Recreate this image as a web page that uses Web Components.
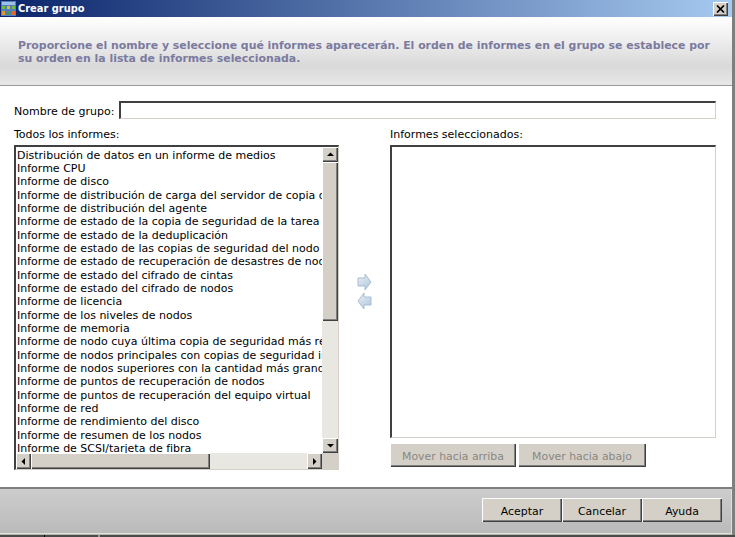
<!DOCTYPE html>
<html lang="es">
<head>
<meta charset="utf-8">
<title>Crear grupo</title>
<style>
  html, body { margin: 0; height: 100%; background: #fff; overflow: hidden; }
  body { font: 11px/13px "DejaVu Sans", Verdana, sans-serif; color: #000; }
</style>
</head>
<body>
<crear-grupo></crear-grupo>

<script>
// bevel shared by the classic buttons
const BEVEL = `
  background:#d4d0c8;
  box-shadow: inset 1px 1px 0 #fff, inset -1px -1px 0 #404040, inset -2px -2px 0 #808080;
`;

class WinTitlebar extends HTMLElement {
  connectedCallback() {
    this.attachShadow({ mode: 'open' });
    this.shadowRoot.innerHTML = `
      <style>
        :host {
          display:flex; align-items:center; height:17px; box-sizing:border-box;
          padding:0 4px 0 1px; gap:2px;
          background: linear-gradient(90deg,#0a246a 0%, #a6caf0 100%);
          color:#fff; font:bold 9.9px/17px "DejaVu Sans", sans-serif;
        }
        svg { width:15px; height:15px; flex:none; }
        .text { flex:1; }
        .close {
          width:15px; height:14px; display:flex; align-items:center; justify-content:center;
          ${BEVEL}
        }
        .close svg { width:9px; height:8px; }
      </style>
      <svg viewBox="0 0 15 15">
        <rect width="15" height="15" fill="#4f7fbe"/>
        <rect x="1" y="1" width="13" height="3" fill="#9cc0e6"/>
        <rect x="1" y="5" width="3" height="3" fill="#6fbf3a"/>
        <rect x="6" y="5" width="3" height="3" fill="#e7b92e"/>
        <rect x="11" y="5" width="3" height="3" fill="#6fbf3a"/>
        <rect x="1" y="10" width="3" height="4" fill="#e7962e"/>
        <rect x="6" y="10" width="3" height="4" fill="#4a9a35"/>
        <rect x="11" y="10" width="3" height="4" fill="#e7682e"/>
      </svg>
      <span class="text"><slot></slot></span>
      <span class="close">
        <svg viewBox="0 0 9 8"><path d="M1 0.5 L8 7.5 M8 0.5 L1 7.5" stroke="#000" stroke-width="1.7" fill="none"/></svg>
      </span>
    `;
  }
}
customElements.define('win-titlebar', WinTitlebar);

class WinBanner extends HTMLElement {
  connectedCallback() {
    this.attachShadow({ mode: 'open' });
    this.shadowRoot.innerHTML = `
      <style>
        :host {
          display:block; height:69px; box-sizing:border-box;
          padding:22px 18px 0 18px;
          background: linear-gradient(180deg,#ffffff 0%, #f0f0f0 30%, #d9d9d9 72%, #e6e6e6 97%);
          border-bottom:1px solid #9a9a9a;
          color:#7b7a9f; font:bold 10.9px/13px "DejaVu Sans", sans-serif;
        }
      </style>
      <slot></slot>
    `;
  }
}
customElements.define('win-banner', WinBanner);

class WinButton extends HTMLElement {
  connectedCallback() {
    this.attachShadow({ mode: 'open' });
    this.shadowRoot.innerHTML = `
      <style>
        :host {
          display:flex; align-items:center; justify-content:center;
          height:24px; box-sizing:border-box; padding-top:3px;
          ${BEVEL}
          font:10.9px/13px "DejaVu Sans", sans-serif; color:#000;
        }
        :host([disabled]) { color:#8a8780; }
      </style>
      <slot></slot>
    `;
  }
}
customElements.define('win-button', WinButton);

class WinScrollbar extends HTMLElement {
  connectedCallback() {
    const horizontal = this.hasAttribute('horizontal');
    const tri = (p) => `<svg width="7" height="7" viewBox="0 0 7 7"><path d="${p}" fill="#000"/></svg>`;
    const before = horizontal ? tri('M5 0 V7 L1.5 3.5 Z') : tri('M3.5 1.5 L7 5 H0 Z');
    const after = horizontal ? tri('M2 0 V7 L5.5 3.5 Z') : tri('M3.5 5.5 L0 2 H7 Z');
    this.attachShadow({ mode: 'open' });
    this.shadowRoot.innerHTML = `
      <style>
        :host {
          display:flex; flex:none; box-sizing:border-box;
          flex-direction:${horizontal ? 'row' : 'column'};
          ${horizontal ? 'height:16px;' : 'width:16px;'}
          background:#e9e7e2;
        }
        .btn {
          flex:none; width:${horizontal ? '15px' : '16px'}; height:${horizontal ? '16px' : '15px'};
          display:flex; align-items:center; justify-content:center;
          ${BEVEL}
        }
        .thumb { flex:none; ${BEVEL} ${horizontal ? 'width:' + this.getAttribute('size') + 'px;' : 'height:' + this.getAttribute('size') + 'px;'} }
        .rest { flex:1; }
      </style>
      <span class="btn">${before}</span>
      <span class="thumb"></span>
      <span class="rest"></span>
      <span class="btn">${after}</span>
    `;
  }
}
customElements.define('win-scrollbar', WinScrollbar);

class WinListbox extends HTMLElement {
  connectedCallback() {
    const items = (this.getAttribute('items') || '').split('|').filter(Boolean);
    const scroll = items.length > 0;
    this.attachShadow({ mode: 'open' });
    this.shadowRoot.innerHTML = `
      <style>
        :host {
          display:grid; box-sizing:border-box; background:#fff;
          border:1px solid #d4d0c8; border-top:2px solid #404040; border-left:2px solid #404040;
          grid-template-columns:${scroll ? 'minmax(0,1fr) 16px' : '1fr'};
          grid-template-rows:${scroll ? 'minmax(0,1fr) 16px' : '1fr'};
          overflow:hidden;
        }
        ul {
          list-style:none; margin:0; padding:1.7px 0 0 1px; overflow:hidden; min-width:0;
          font:11px/13.33px "DejaVu Sans", sans-serif;
        }
        li { white-space:nowrap; height:13.33px; }
        .corner { background:#d4d0c8; }
      </style>
      <ul>${items.map((t) => `<li>${t}</li>`).join('')}</ul>
      ${scroll ? `
        <win-scrollbar size="159"></win-scrollbar>
        <win-scrollbar horizontal size="179"></win-scrollbar>
        <span class="corner"></span>` : ''}
    `;
  }
}
customElements.define('win-listbox', WinListbox);

class TransferArrows extends HTMLElement {
  connectedCallback() {
    this.attachShadow({ mode: 'open' });
    const arrow = (id, d) => `
      <svg width="15" height="18" viewBox="0 0 15 18">
        <defs><linearGradient id="${id}" x1="0" y1="0" x2="0.6" y2="1">
          <stop offset="0" stop-color="#eef3f8"/><stop offset="1" stop-color="#b4c9de"/>
        </linearGradient></defs>
        <path d="${d}" fill="url(#${id})" stroke="#a9bdd2" stroke-width="1"/>
      </svg>`;
    this.shadowRoot.innerHTML = `
      <style>
        :host { display:flex; flex-direction:column; align-items:center; gap:1px; }
        svg { display:block; }
      </style>
      ${arrow('ra', 'M1 5 H8 V1 L14 9 L8 17 V13 H1 Z')}
      ${arrow('la', 'M14 5 H7 V1 L1 9 L7 17 V13 H14 Z')}
    `;
  }
}
customElements.define('transfer-arrows', TransferArrows);

class CrearGrupo extends HTMLElement {
  connectedCallback() {
    const informes = [
      'Distribución de datos en un informe de medios',
      'Informe CPU',
      'Informe de disco',
      'Informe de distribución de carga del servidor de copia de seguridad',
      'Informe de distribución del agente',
      'Informe de estado de la copia de seguridad de la tarea',
      'Informe de estado de la deduplicación',
      'Informe de estado de las copias de seguridad del nodo',
      'Informe de estado de recuperación de desastres de nodos',
      'Informe de estado del cifrado de cintas',
      'Informe de estado del cifrado de nodos',
      'Informe de licencia',
      'Informe de los niveles de nodos',
      'Informe de memoria',
      'Informe de nodo cuya última copia de seguridad más reciente',
      'Informe de nodos principales con copias de seguridad incorrectas',
      'Informe de nodos superiores con la cantidad más grande',
      'Informe de puntos de recuperación de nodos',
      'Informe de puntos de recuperación del equipo virtual',
      'Informe de red',
      'Informe de rendimiento del disco',
      'Informe de resumen de los nodos',
      'Informe de SCSI/tarjeta de fibra',
    ];
    this.attachShadow({ mode: 'open' });
    this.shadowRoot.innerHTML = `
      <style>
        :host {
          display:flex; flex-direction:column; width:735px; height:537px; box-sizing:border-box;
          background:#fff; color:#000;
          border-right:3px solid #7f7f7f;
        }
        .main {
          flex:1; min-height:0; display:flex; flex-direction:column;
          padding:15px 16px 0 14px;
        }
        .name { display:flex; align-items:center; gap:5px; height:18px; }
        .name label { padding-top:2px; }
        .input {
          flex:1; height:18px; box-sizing:border-box; background:#fff;
          border:1px solid #d4d0c8; border-top:2px solid #404040; border-left:2px solid #404040;
        }
        .lists {
          display:grid; grid-template-columns:325px 51px 326px;
          grid-template-rows:13px 325px; row-gap:4px;
          margin-top:9px;
        }
        .left { grid-column:1; grid-row:2; }
        .mid { grid-column:2; grid-row:2; display:flex; justify-content:center; padding-top:128px; box-sizing:border-box; }
        .right { grid-column:3; grid-row:2; display:flex; flex-direction:column; gap:5px; padding-bottom:3px; box-sizing:border-box; }
        .right win-listbox { flex:1; min-height:0; }
        .moves { display:flex; gap:2px; height:24px; }
        .moves win-button:first-child { width:126px; }
        .moves win-button:last-child { width:128px; }
        .footer {
          height:48px; flex:none; box-sizing:border-box;
          border-top:2px solid #808080;
          background:linear-gradient(180deg,#cdcdcd,#b9b9b9);
          box-shadow: inset 0 -1px 0 #b5b5b5, inset 0 -2px 0 #dfe3d3, inset -1px 0 0 #dfe3d3;
          display:flex; justify-content:flex-end; padding:9px 10px 0 0;
        }
        .footer win-button { width:80px; }
        /* what shows of the window underneath */
        .under {
          height:2px; flex:none; margin-right:-3px;
          background:
            linear-gradient(#000,#000) 44px 0 / 1px 2px no-repeat,
            linear-gradient(#999,#999) 98px 0 / 2px 2px no-repeat,
            #4a4a4a;
        }
      </style>
      <win-titlebar>Crear grupo</win-titlebar>
      <win-banner>Proporcione el nombre y seleccione qué informes aparecerán. El orden de informes en el grupo se establece por su orden en la lista de informes seleccionada.</win-banner>
      <div class="main">
        <div class="name"><label>Nombre de grupo:</label><div class="input"></div></div>
        <div class="lists">
          <label>Todos los informes:</label>
          <span></span>
          <label>Informes seleccionados:</label>
          <win-listbox class="left" items="${informes.join('|')}"></win-listbox>
          <div class="mid"><transfer-arrows></transfer-arrows></div>
          <div class="right">
            <win-listbox></win-listbox>
            <div class="moves">
              <win-button disabled>Mover hacia arriba</win-button>
              <win-button disabled>Mover hacia abajo</win-button>
            </div>
          </div>
        </div>
      </div>
      <div class="footer">
        <win-button>Aceptar</win-button>
        <win-button>Cancelar</win-button>
        <win-button>Ayuda</win-button>
      </div>
      <div class="under"></div>
    `;
  }
}
customElements.define('crear-grupo', CrearGrupo);
</script>
</body>
</html>
